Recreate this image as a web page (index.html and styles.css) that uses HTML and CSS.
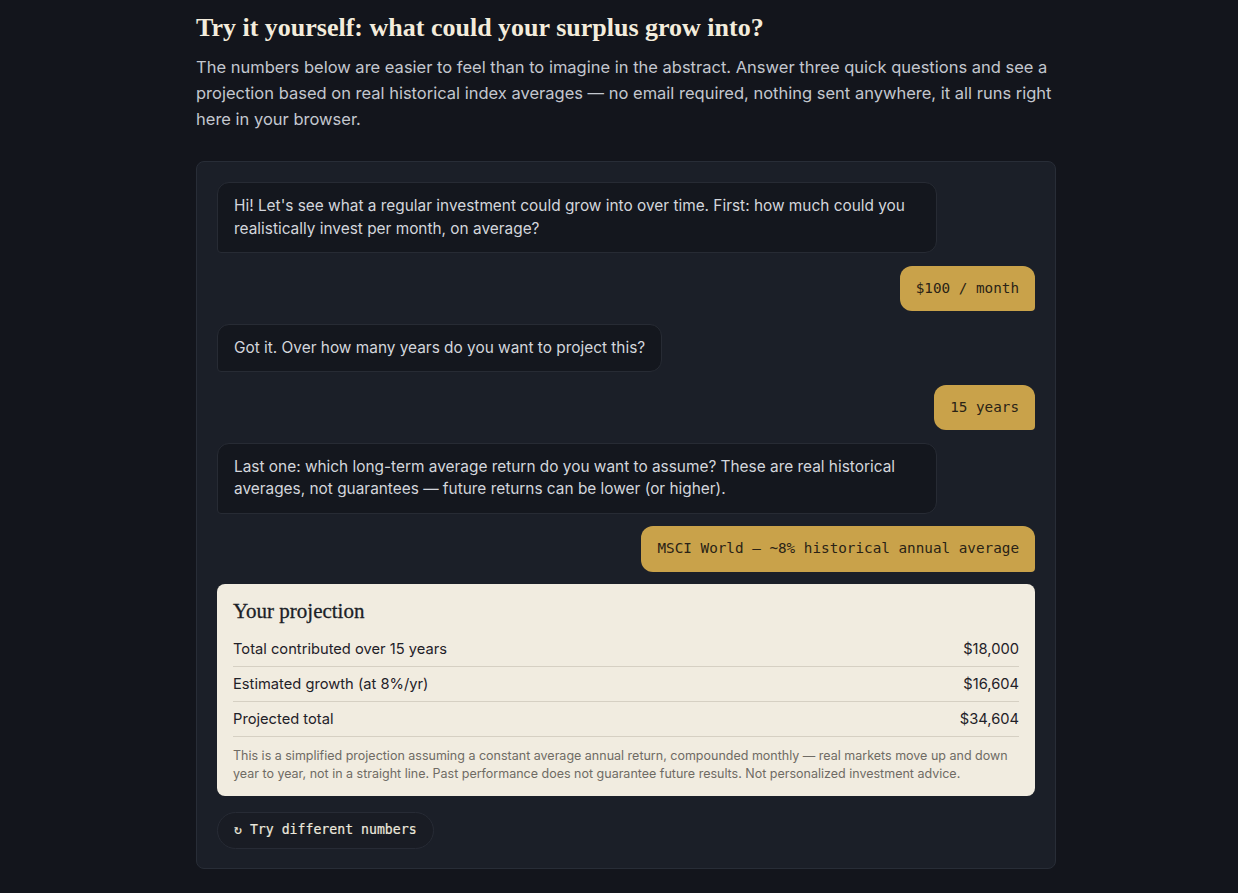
FILE: index.html
```html
<!DOCTYPE html>
<html lang="en">
<head>
<meta charset="utf-8">
<title>Try it yourself</title>
<link rel="stylesheet" href="styles.css">
</head>
<body>
<main class="section">
  <h2 class="title">Try it yourself: what could your surplus grow into?</h2>
  <p class="lead">The numbers below are easier to feel than to imagine in the abstract. Answer three quick questions and see a projection based on real historical index averages — no email required, nothing sent anywhere, it all runs right here in your browser.</p>

  <div class="chat">
    <div class="msg bot">Hi! Let's see what a regular investment could grow into over time. First: how much could you realistically invest per month, on average?</div>
    <div class="msg user">$100 / month</div>
    <div class="msg bot">Got it. Over how many years do you want to project this?</div>
    <div class="msg user">15 years</div>
    <div class="msg bot">Last one: which long-term average return do you want to assume? These are real historical averages, not guarantees — future returns can be lower (or higher).</div>
    <div class="msg user">MSCI World — ~8% historical annual average</div>

    <div class="result">
      <h3 class="result-title">Your projection</h3>
      <div class="row"><span>Total contributed over 15 years</span><span>$18,000</span></div>
      <div class="row"><span>Estimated growth (at 8%/yr)</span><span>$16,604</span></div>
      <div class="row"><span>Projected total</span><span>$34,604</span></div>
      <p class="note">This is a simplified projection assuming a constant average annual return, compounded monthly — real markets move up and down year to year, not in a straight line. Past performance does not guarantee future results. Not personalized investment advice.</p>
    </div>

    <div class="actions">
      <button class="reset" type="button">↻ Try different numbers</button>
    </div>
  </div>
</main>
</body>
</html>
```

FILE: styles.css
```css
html, body {
  margin: 0;
  padding: 0;
  background: #13151c;
}

body {
  font-family: Inter, "Noto Sans", sans-serif;
  color: #c6cad2;
  padding-left: 14px;
}

.section {
  width: 860px;
  margin: 0 auto;
  padding: 12px 0 24px;
}

.title {
  font-family: "Liberation Serif", "DejaVu Serif", serif;
  font-weight: 700;
  font-size: 26px;
  line-height: 32px;
  color: #f3ecdc;
  margin: 0 0 10px;
}

.lead {
  font-size: 16.5px;
  line-height: 26px;
  margin: 0 0 29px;
  color: #c3c7cf;
}

.chat {
  background: #1b1f28;
  border: 1px solid #282d37;
  border-radius: 8px;
  padding: 20px 20px 19px;
  display: flex;
  flex-direction: column;
  gap: 12.5px;
}

.msg {
  font-size: 15.4px;
  line-height: 22.5px;
  padding: 12px 16px;
  border-radius: 12px;
  max-width: 88%;
  box-sizing: border-box;
}

.bot {
  align-self: flex-start;
  background: #14171e;
  border: 1px solid #272b34;
  border-bottom-left-radius: 4px;
  color: #d3d6dc;
}

.user {
  align-self: flex-end;
  background: #c9a24a;
  color: #2a2316;
  font-family: "DejaVu Sans Mono", "Liberation Mono", monospace;
  font-size: 14.3px;
  line-height: 21.5px;
  border-bottom-right-radius: 4px;
}

.result {
  background: #f1ece0;
  border-radius: 8px;
  padding: 15px 16px 14px;
  color: #1f2128;
}

.result-title {
  font-family: "Liberation Serif", "DejaVu Serif", serif;
  font-weight: 400;
  font-size: 21px;
  line-height: 24px;
  margin: 0 0 9px;
  color: #1c1f27;
  -webkit-text-stroke: 0.3px #1c1f27;
}

.row {
  display: flex;
  justify-content: space-between;
  font-size: 14.7px;
  line-height: 22px;
  padding: 6px 0 6px;
  border-bottom: 1px solid #d6d0c3;
}

.note {
  font-size: 12.5px;
  line-height: 17.5px;
  color: #6f6b64;
  margin: 10px 0 0;
}

.actions {
  display: flex;
  padding-top: 3px;
}

.reset {
  font-family: "DejaVu Sans Mono", "Liberation Mono", monospace;
  font-size: 13.2px;
  font-weight: 400;
  color: #ece8de;
  background: #191c24;
  border: 1px solid #272b35;
  border-radius: 999px;
  padding: 8.5px 16px;
  line-height: 18px;
  cursor: pointer;
  -webkit-text-stroke: 0.2px #ece8de;
}
```
